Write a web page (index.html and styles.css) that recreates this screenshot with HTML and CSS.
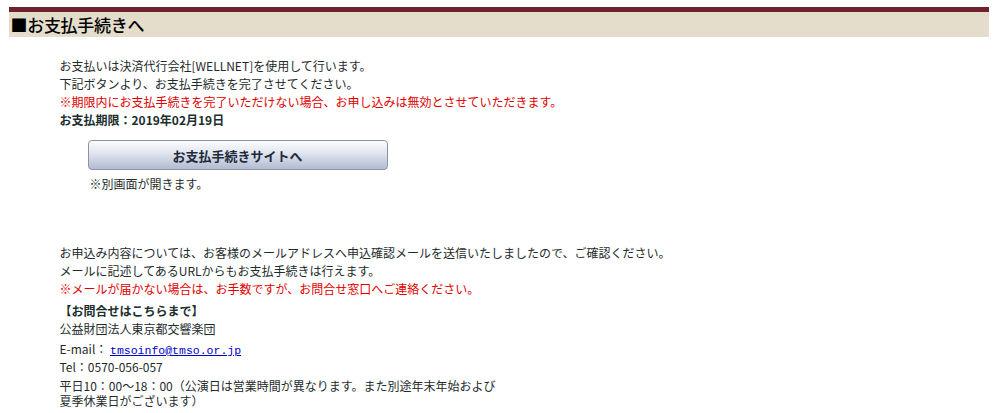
FILE: index.html
```html
<!DOCTYPE html>
<html lang="ja">
<head>
<meta charset="utf-8">
<title>お支払手続きへ</title>
<link rel="stylesheet" href="styles.css">
</head>
<body>
<div class="page">
  <h1 class="title">■お支払手続きへ</h1>
  <div class="content">
    <p class="line">お支払いは決済代行会社[WELLNET]を使用して行います。</p>
    <p class="line">下記ボタンより、お支払手続きを完了させてください。</p>
    <p class="line red">※期限内にお支払手続きを完了いただけない場合、お申し込みは無効とさせていただきます。</p>
    <p class="line bold">お支払期限：2019年02月19日</p>
    <div class="btn-area">
      <button class="pay-btn" type="button">お支払手続きサイトへ</button>
      <p class="line note">※別画面が開きます。</p>
    </div>
    <div class="info">
      <p class="line">お申込み内容については、お客様のメールアドレスへ申込確認メールを送信いたしましたので、ご確認ください。</p>
      <p class="line">メールに記述してあるURLからもお支払手続きは行えます。</p>
      <p class="line red">※メールが届かない場合は、お手数ですが、お問合せ窓口へご連絡ください。</p>
    </div>
    <div class="contact">
      <p class="line bold contact-head">【お問合せはこちらまで】</p>
      <p class="line">公益財団法人東京都交響楽団</p>
      <p class="line mail">E-mail： <a href="#">tmsoinfo@tmso.or.jp</a></p>
      <p class="line">Tel：0570-056-057</p>
      <p class="line hours">平日10：00～18：00（公演日は営業時間が異なります。また別途年末年始および夏季休業日がございます）</p>
    </div>
  </div>
</div>
</body>
</html>
```

FILE: styles.css
```css
html, body {
  margin: 0;
  padding: 0;
  background: #ffffff;
}

body {
  font-family: "Noto Sans CJK JP", "Liberation Sans", sans-serif;
  color: #1e2b2b;
}

.page {
  width: 980px;
  margin: 7px auto 0;
}

.title {
  margin: 0;
  border-top: 5px solid #6d2131;
  background: #e4ddcc;
  height: 25px;
  line-height: 25px;
  padding-left: 2px;
  font-size: 17px;
  font-weight: 500;
  color: #000;
  letter-spacing: -0.3px;
}

.content {
  padding: 20px 0 0 51px;
}

.line {
  margin: 0;
  font-size: 12px;
  line-height: 18px;
  white-space: nowrap;
}

.red {
  color: #e00000;
}

.bold {
  font-weight: bold;
  color: #1a2e2e;
}

.btn-area {
  padding: 11px 0 0 28px;
}

.pay-btn {
  display: block;
  width: 300px;
  height: 30px;
  margin: 0;
  padding: 0;
  border: 1px solid #8c92a4;
  border-radius: 4px;
  background: linear-gradient(to bottom, #fbfcfd 0%, #e3e7f0 40%, #b3bbd2 100%);
  font-family: "Noto Sans CJK JP", "Liberation Sans", sans-serif;
  font-size: 13px;
  font-weight: bold;
  color: #1e2b3a;
  cursor: pointer;
}

.note {
  margin-top: 5px;
  margin-left: 2px;
}

.info {
  padding-top: 51px;
}

.contact {
  padding-top: 4px;
  width: 442px;
}

.mail {
  line-height: 18px;
  padding-top: 2px;
}

.mail a {
  color: #0000cc;
  text-decoration: underline;
  font-family: "Liberation Mono", monospace;
  font-size: 11.5px;
  line-height: 1;
}

.hours {
  white-space: normal;
  line-height: 15px;
  padding-top: 2px;
}
```
